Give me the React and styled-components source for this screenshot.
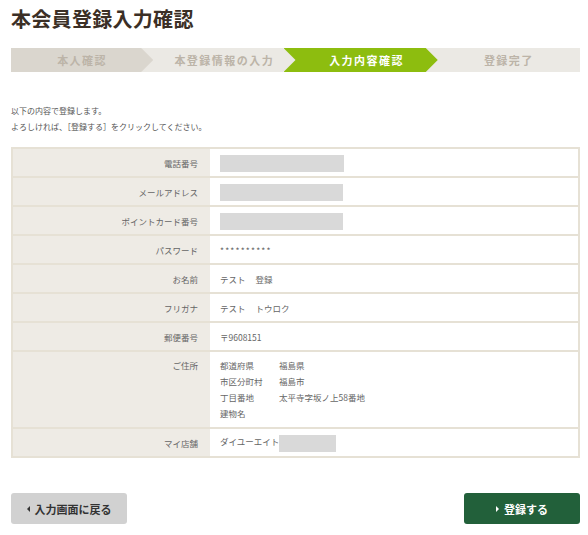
import styled, { createGlobalStyle } from 'styled-components';

const GlobalStyle = createGlobalStyle`
  body {
    margin: 0;
    background: #fff;
    font-family: "Noto Sans CJK JP", "Noto Sans", sans-serif;
  }
`;

const Page = styled.div`
  width: 569px;
  padding: 6px 0 0 11px;
`;

const Title = styled.h1`
  margin: 0;
  font-size: 20px;
  line-height: 26px;
  font-weight: 700;
  color: #3b2f26;
  letter-spacing: 0.3px;
`;

const Steps = styled.ol`
  display: flex;
  list-style: none;
  margin: 16px 0 0;
  padding: 0;
  height: 24px;
`;

const Step = styled.li`
  position: relative;
  z-index: ${(p) => p.$z};
  flex: 1;
  margin-left: ${(p) => (p.$first ? '0' : '-12px')};
  padding-left: ${(p) => (p.$first ? '0' : '12px')};
  height: 24px;
  line-height: 24px;
  text-align: center;
  font-size: 11px;
  font-weight: 700;
  letter-spacing: 1.5px;
  color: ${(p) => (p.$active ? '#fff' : '#bcb4a8')};
  background: ${(p) => (p.$active ? '#8dbd0f' : p.$done ? '#dad6ce' : '#ebe9e4')};
  clip-path: ${(p) => (p.$last
    ? 'none'
    : 'polygon(0 0, calc(100% - 12px) 0, 100% 50%, calc(100% - 12px) 100%, 0 100%)')};
`;

const Intro = styled.div`
  margin-top: 31px;
  font-size: 8px;
  line-height: 16px;
  color: #555;
`;

const Table = styled.table`
  width: 100%;
  margin-top: 12px;
  border-collapse: collapse;
  border: 2px solid #e6e1d5;
  font-size: 8.5px;
  color: #666;
`;

const Row = styled.tr`
  border-top: 2px solid #e6e1d5;
`;

const Label = styled.th`
  width: 185px;
  height: 27px;
  padding: ${(p) => (p.$top ? '5px 12px 0 0' : '0 12px 0 0')};
  background: #eeebe5;
  text-align: right;
  font-weight: 400;
  vertical-align: ${(p) => (p.$top ? 'top' : 'middle')};
  line-height: 16px;
`;

const Value = styled.td`
  padding: 0 0 0 10px;
  vertical-align: middle;
  background: #fff;
  line-height: 16px;
`;

const Masked = styled.span`
  display: inline-block;
  vertical-align: middle;
  width: ${(p) => p.$w}px;
  height: 17px;
  background: #d9d9d9;
`;

const Secret = styled.span`
  letter-spacing: 1.2px;
`;

const Address = styled.dl`
  display: grid;
  grid-template-columns: 59px auto;
  margin: 0;
  padding: 5px 0 6px;
  line-height: 16px;

  dt, dd {
    margin: 0;
  }
`;

const Spaced = styled.span`
  display: inline-block;
  margin-right: ${(p) => p.$gap}px;
`;

const Actions = styled.div`
  display: flex;
  justify-content: space-between;
  margin-top: 35px;
`;

const Button = styled.button`
  display: flex;
  align-items: center;
  justify-content: center;
  gap: 5px;
  width: 116px;
  height: 31px;
  border: none;
  border-radius: 3px;
  font-family: inherit;
  font-size: 11px;
  font-weight: 700;
  color: ${(p) => (p.$primary ? '#fff' : '#333')};
  background: ${(p) => (p.$primary ? '#22603a' : '#d1d1d1')};
  cursor: pointer;
`;

const Caret = styled.span`
  width: 0;
  height: 0;
  border-top: 3px solid transparent;
  border-bottom: 3px solid transparent;
  ${(p) => (p.$left ? 'border-right: 3px solid currentColor;' : 'border-left: 3px solid currentColor;')}
`;

const rows = [
  { label: '電話番号', masked: 124 },
  { label: 'メールアドレス', masked: 123 },
  { label: 'ポイントカード番号', masked: 123 },
  { label: 'パスワード', text: <Secret>**********</Secret> },
  { label: 'お名前', text: <><Spaced $gap={10}>テスト</Spaced>登録</> },
  { label: 'フリガナ', text: <><Spaced $gap={10}>テスト</Spaced>トウロク</> },
  { label: '郵便番号', text: '〒9608151' },
];

const address = [
  ['都道府県', '福島県'],
  ['市区分町村', '福島市'],
  ['丁目番地', '太平寺字坂ノ上58番地'],
  ['建物名', ''],
];

export default function App() {
  return (
    <Page>
      <GlobalStyle />
      <Title>本会員登録入力確認</Title>
      <Steps>
        <Step $first $done $z={4}>本人確認</Step>
        <Step $z={3}>本登録情報の入力</Step>
        <Step $active $z={2}>入力内容確認</Step>
        <Step $last $z={1}>登録完了</Step>
      </Steps>
      <Intro>
        以下の内容で登録します。
        <br />
        よろしければ、［登録する］をクリックしてください。
      </Intro>
      <Table>
        <tbody>
          {rows.map((r) => (
            <Row key={r.label}>
              <Label>{r.label}</Label>
              <Value>{r.masked ? <Masked $w={r.masked} /> : r.text}</Value>
            </Row>
          ))}
          <Row>
            <Label $top>ご住所</Label>
            <Value>
              <Address>
                {address.map(([k, v]) => (
                  <>
                    <dt key={k}>{k}</dt>
                    <dd key={k + 'v'}>{v}</dd>
                  </>
                ))}
              </Address>
            </Value>
          </Row>
          <Row>
            <Label>マイ店舗</Label>
            <Value>
              ダイユーエイト
              <Masked $w={57} />
            </Value>
          </Row>
        </tbody>
      </Table>
      <Actions>
        <Button type="button">
          <Caret $left />
          入力画面に戻る
        </Button>
        <Button type="button" $primary>
          <Caret />
          登録する
        </Button>
      </Actions>
    </Page>
  );
}
